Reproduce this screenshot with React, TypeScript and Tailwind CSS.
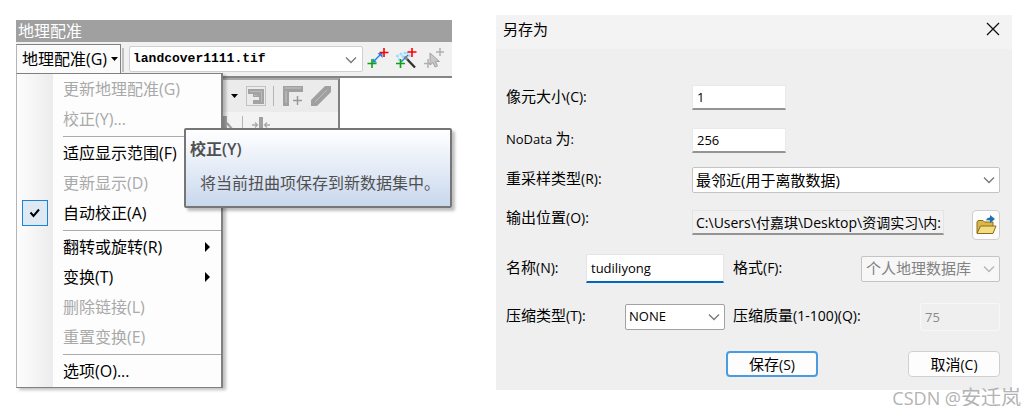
import { useState, type ReactNode } from "react"

const field = "bg-white border border-[#e9e9e9] border-b-2 border-b-[#949494] text-[13px] leading-4 pl-1 outline-none"

function Chevron({ className }: { className: string }) {
  return (
    <svg viewBox="0 0 12 8" className={`absolute w-3 h-2 pointer-events-none ${className}`} fill="none" stroke="currentColor" strokeWidth="1.3">
      <path d="M1 1.5 6 6.5 11 1.5" />
    </svg>
  )
}

function Label({ htmlFor, cn, en, className = "" }: { htmlFor: string; cn: string; en: string; className?: string }) {
  return (
    <label htmlFor={htmlFor} className={`pb-[3px] text-[15px] leading-5 whitespace-nowrap shrink-0 ${className}`}>
      {cn}
      <span className="text-sm leading-5">{en}</span>
    </label>
  )
}

/* Menu */
function MenuItem({ text, disabled, arrow }: { text: string; disabled?: boolean; arrow?: boolean }) {
  return (
    <button
      role="menuitem"
      disabled={disabled}
      className="w-full h-[30px] pl-[46px] pr-[11px] flex items-center justify-between text-left text-black disabled:text-[#a9a9a9]"
    >
      {text}
      {arrow && (
        <svg viewBox="0 0 5 10" className="w-[5px] h-[10px]">
          <path d="M0 0 5 5 0 10Z" fill="#000" />
        </svg>
      )}
    </button>
  )
}

function Separator() {
  return <div role="separator" className="h-1 ml-[46px] flex items-center"><div className="h-px w-full bg-[#ababab]" /></div>
}

function GeoMenu() {
  const [auto, setAuto] = useState(true)

  return (
    <div
      role="menu"
      className="absolute left-0 top-full z-10 w-[207px] pb-px border border-[#808080] border-l-[#b5b5b5] border-r-2 bg-[linear-gradient(to_right,#fdfdfd_0,#ececec_36px,#fdfdfd_36px)] shadow-[3px_2px_3px_rgba(0,0,0,0.25)]"
    >
      <MenuItem text="更新地理配准(G)" disabled />
      <MenuItem text="校正(Y)..." disabled />
      <Separator />
      <MenuItem text="适应显示范围(F)" />
      <MenuItem text="更新显示(D)" disabled />
      <label className="h-[30px] pl-[5px] flex items-center text-black">
        <span className="relative w-[26px] h-[26px] mr-[15px] shrink-0">
          <input
            type="checkbox"
            checked={auto}
            onChange={(e) => setAuto(e.target.checked)}
            className="block appearance-none w-full h-full border border-[#1883d7] bg-[#dfe9f4]"
          />
          {auto && (
            <svg viewBox="0 0 26 26" className="absolute inset-0 pointer-events-none" fill="none" stroke="#000" strokeWidth="2">
              <path d="M8.5 12.5 11.5 16 17 9.5" />
            </svg>
          )}
        </span>
        自动校正(A)
      </label>
      <Separator />
      <MenuItem text="翻转或旋转(R)" arrow />
      <MenuItem text="变换(T)" arrow />
      <MenuItem text="删除链接(L)" disabled />
      <MenuItem text="重置变换(E)" disabled />
      <Separator />
      <MenuItem text="选项(O)..." />
    </div>
  )
}

/* Toolbar icons */
function ToolButton({ label, className = "", children }: { label: string; className?: string; children: ReactNode }) {
  return (
    <button aria-label={label} className={`shrink-0 w-[22px] h-[22px] ${className}`}>
      <svg viewBox="0 0 22 22" className="w-[22px] h-[22px]" fill="none">{children}</svg>
    </button>
  )
}

function LinkIcon() {
  return (
    <ToolButton label="添加控制点">
      <path d="M6 15 15 6" stroke="#1e88e5" strokeWidth="1.4" />
      <path d="M15.500 6v5L10.500 6ZM6 15.500v-4L10 15.500Z" fill="#1e88e5" />
      <path d="M17 1v9M12.500 5.500h9" stroke="#f00" strokeWidth="1.600" />
      <path d="M5 12v9M.5 16.500h9" stroke="#12a012" strokeWidth="1.600" />
    </ToolButton>
  )
}

function WandIcon() {
  return (
    <ToolButton label="自动配准" className="ml-[6px]">
      <g fill="#9edcff">
        <circle cx="2.500" cy="9" r="1.600" />
        <circle cx="4" cy="12.500" r="1.300" />
        <circle cx="6" cy="7" r="1.600" />
        <circle cx="10" cy="6" r="1.600" />
        <circle cx="8" cy="9.500" r="1.500" />
        <circle cx="14.500" cy="8.500" r="1.500" />
        <circle cx="12.500" cy="6" r="1.200" />
      </g>
      <path d="M6 15 13 8" stroke="#1e88e5" strokeWidth="1.500" />
      <path d="M10 10 20 20.500" stroke="#333" strokeWidth="2.400" />
      <path d="M9.500 9.500 12.500 12.500" stroke="#888" strokeWidth="2.400" />
      <path d="M17 1v9M12.500 5h9" stroke="#f00" strokeWidth="1.600" />
      <path d="M5.500 12v9M1 16.500h9" stroke="#12a012" strokeWidth="1.600" />
    </ToolButton>
  )
}

function SelectLinkIcon() {
  return (
    <ToolButton label="选择控制点" className="ml-[6px]">
      <path d="M17 1v8M13 5h8M5 12v9M1 16.500h8" stroke="#b0b0b0" strokeWidth="1.500" />
      <path d="M7 6V18L10 15.500 12 20 14.500 19 12.500 14.500H16.500Z" fill="#c8c8c8" stroke="#a2a2a2" />
    </ToolButton>
  )
}

function EditorPanel() {
  return (
    <div className="w-[324px] h-[58px] pl-[207px] border-t-2 border-t-[#a8a8a8] border-r-2 border-r-[#808080] bg-[#f3f3f3] overflow-hidden">
      <div className="h-8 pl-2 flex items-center bg-[#ebebeb]">
        <svg viewBox="0 0 7 4" className="w-[7px] h-1"><path d="M0 0h7L3.500 4Z" fill="#000" /></svg>
        <svg viewBox="0 0 20 20" className="w-5 h-5 ml-2" fill="none">
          <rect x=".5" y=".5" width="19" height="19" stroke="#999" strokeDasharray="1 1" />
          <path d="M2 3h16v15H7v-4h6v-3H7V8H2Z" fill="#a3a3a3" />
          <path d="M4 5.500h11.500V16M8 9.500h3" stroke="#bbb" />
        </svg>
        <div className="w-px h-5 mx-[7px] bg-[#b5b5b5]" />
        <svg viewBox="0 0 22 22" className="w-[22px] h-[22px] ml-px" fill="none">
          <path d="M1 1h20v6H7v14H1Z" fill="#a0a0a0" />
          <path d="M2.500 3h17M4 6v12" stroke="#c6c6c6" />
          <path d="M15.500 11v9M11 15.500h9" stroke="#999" strokeWidth="1.500" />
        </svg>
        <svg viewBox="0 0 22 22" className="w-[22px] h-[22px] ml-[6px]" fill="none">
          <path d="M1 15 15 1h6v6L7 21H1Z" fill="#a0a0a0" />
          <path d="M5 17 17 5" stroke="#bbb" />
        </svg>
      </div>
      <div className="h-8 pt-1 flex items-start">
        <svg viewBox="0 0 10 16" className="w-[10px] h-4" fill="none">
          <path d="M0 0h4v16H0Z" fill="#a8a8a8" />
          <path d="M4 7 9 13" stroke="#a0a0a0" strokeWidth="2" />
        </svg>
        <div className="w-px h-4 mx-[9px] bg-[#b5b5b5]" />
        <svg viewBox="0 0 18 18" className="w-[18px] h-[18px]" fill="none">
          <path d="M9 1v16" stroke="#a0a0a0" strokeWidth="4" />
          <path d="M0 9h5M3 6.500 5.500 9 3 11.500M18 9h-5M15 6.500 12.500 9 15 11.500" stroke="#aaa" strokeWidth="1.300" />
        </svg>
      </div>
    </div>
  )
}

function GeoreferencingWindow() {
  return (
    <section className="relative min-w-0 mt-5 text-base">
      <h2 className="h-[22px] pl-[2px] flex items-center bg-[#a0a0a0] text-white leading-5">地理配准</h2>
      <div className="h-9 pt-[2px] flex items-start border-b-2 border-b-[#858585] bg-[#f1f1f1]">
        <div className="relative">
          <button className="relative z-20 h-[29px] w-[105px] pl-[5px] flex items-center gap-1 border border-b-0 border-[#808080] border-l-[#b5b5b5] bg-[#fbfbfb] text-black whitespace-nowrap">
            地理配准(G)
            <svg viewBox="0 0 7 4" className="w-[7px] h-1"><path d="M0 0h7L3.500 4Z" fill="#000" /></svg>
          </button>
          <GeoMenu />
        </div>
        <div className="w-[2px] h-6 mt-1 ml-px bg-[#c0c0c0]" />
        <div className="relative flex-1 ml-[5px] mt-[2px]">
          <select
            aria-label="图层"
            className="appearance-none block w-full h-[26px] pl-[3px] border border-[#d0d0d0] rounded-xs bg-white text-black text-[13px] font-['Liberation_Mono',monospace] font-semibold"
          >
            <option>landcover1111.tif</option>
          </select>
          <Chevron className="right-[6px] top-[10px] text-[#777]" />
        </div>
        <div className="flex pl-[4px] pr-[7px] pt-[3px]">
          <LinkIcon />
          <WandIcon />
          <SelectLinkIcon />
        </div>
      </div>
      <EditorPanel />

      {/* Tooltip */}
      <div
        role="tooltip"
        className="absolute z-30 left-[168px] right-0 top-[108px] h-20 pl-1 pt-[9px] border-2 border-[#767676] rounded-xs bg-linear-to-b from-white to-[#c9d8ed] text-[#505050] shadow-[3px_3px_3px_rgba(0,0,0,0.25)]"
      >
        <p className="leading-5 font-semibold">校正(Y)</p>
        <p className="pl-[10px] mt-[14px] leading-5 whitespace-nowrap">将当前扭曲项保存到新数据集中。</p>
      </div>
    </section>
  )
}

function FolderIcon() {
  return (
    <svg viewBox="0 0 22 22" className="w-[22px] h-[22px]">
      <path d="M2 19V8l1-1.500h5L9.500 8H18v11Z" fill="#d9b84a" stroke="#8a6d1a" />
      <path d="M2 19.500 5.500 12H21l-3 7.500Z" fill="#f3dc82" stroke="#8a6d1a" />
      <path d="M11 6.500c.5-2 2-3 4-3V1l5 4-5 4V6.500c-1.500-.5-3-.5-4 0Z" fill="#1c6fb5" />
    </svg>
  )
}

function SaveAsDialog() {
  return (
    <section role="dialog" aria-label="另存为" className="min-w-0 mt-[15px] bg-[#efefef] text-black">
      <header className="h-[34px] pl-[7px] pr-3 pb-[6px] flex items-center justify-between bg-[#f3f3f3]">
        <h2 className="text-[15px] leading-5">另存为</h2>
        <button aria-label="关闭">
          <svg viewBox="0 0 14 14" className="w-[14px] h-[14px]" stroke="#111" strokeWidth="1.300">
            <path d="M1 1 13 13M13 1 1 13" />
          </svg>
        </button>
      </header>

      <form className="pl-[10px] pr-3 pt-9 pb-[13px]" onSubmit={(e) => e.preventDefault()}>
        <div className="flex items-center">
          <Label htmlFor="cell" cn="像元大小" en="(C):" className="w-[186px]" />
          <input id="cell" defaultValue="1" className={`${field} w-[94px] h-[25px]`} />
        </div>

        <div className="flex items-start mt-[18px]">
          <label htmlFor="nodata" className="w-[186px] shrink-0 text-[13px] leading-5">
            NoData <span className="text-[15px] leading-5">为</span>:
          </label>
          <input id="nodata" defaultValue="256" className={`${field} w-[94px] h-[25px]`} />
        </div>

        <div className="flex items-center mt-[14px]">
          <Label htmlFor="resample" cn="重采样类型" en="(R):" className="w-[186px]" />
          <div className="relative flex-1">
            <select id="resample" className="appearance-none block w-full h-[26px] pl-[3px] border border-[#c4c4c4] rounded-xs bg-white text-[15px]">
              <option>最邻近(用于离散数据)</option>
            </select>
            <Chevron className="right-[5px] top-[9px] text-[#777]" />
          </div>
        </div>

        <div className="flex items-start mt-[14px]">
          <Label htmlFor="path" cn="输出位置" en="(O):" className="w-[186px]" />
          <input
            id="path"
            readOnly
            defaultValue="C:\Users\付嘉琪\Desktop\资调实习\内:"
            className="flex-1 min-w-0 h-[25px] mt-[3px] pl-[3px] border border-[#e4e4e4] border-b-2 border-b-[#949494] bg-[#f1f1f1] text-sm outline-none"
          />
          <button aria-label="浏览" className="w-7 h-[30px] mt-[3px] ml-[28px] flex items-center justify-center border border-[#cfcfcf] rounded bg-[#fdfdfd]">
            <FolderIcon />
          </button>
        </div>

        <div className="flex items-center mt-[14px]">
          <Label htmlFor="name" cn="名称" en="(N):" className="w-20" />
          <input
            id="name"
            defaultValue="tudiliyong"
            className="w-[138px] h-[29px] pl-1 border border-[#e4e4e4] border-b-2 border-b-[#0067c0] bg-white text-[13px] outline-none"
          />
          <Label htmlFor="format" cn="格式" en="(F):" className="ml-[9px]" />
          <div className="relative w-[139px] ml-auto">
            <select
              id="format"
              disabled
              className="appearance-none block w-full h-[26px] pl-1 border border-[#c4c4c4] rounded-xs bg-[#f7f7f7] text-[15px] text-[#838383] opacity-100"
            >
              <option>个人地理数据库</option>
            </select>
            <Chevron className="right-[5px] top-[9px] text-[#b5b5b5]" />
          </div>
        </div>

        <div className="flex items-center mt-5">
          <Label htmlFor="compress" cn="压缩类型" en="(T):" className="w-[119px]" />
          <div className="relative w-[100px]">
            <select id="compress" className="appearance-none block w-full h-[26px] pl-[3px] border border-[#a2a2a2] rounded-xs bg-white text-[13px]">
              <option>NONE</option>
            </select>
            <Chevron className="right-[5px] top-[9px] text-[#777]" />
          </div>
          <Label htmlFor="quality" cn="压缩质量" en="(1-100)(Q):" className="ml-2" />
          <input
            id="quality"
            disabled
            defaultValue="75"
            className="w-20 h-7 ml-auto pl-1 border border-[#f7f7f7] rounded-xs bg-[#efefef] text-[13px] text-[#8a8a8a]"
          />
        </div>

        <div className="flex justify-end gap-[90px] mt-5">
          <button type="submit" className="w-[92px] h-[26px] border-2 border-[#4a9be0] rounded bg-[#fdfdfd] text-[15px] leading-5">
            保存<span className="text-sm leading-5">(S)</span>
          </button>
          <button type="button" className="w-[92px] h-[26px] border border-[#d0d0d0] rounded bg-[#fdfdfd] text-[15px] leading-5">
            取消<span className="text-sm leading-5">(C)</span>
          </button>
        </div>
      </form>
    </section>
  )
}

export default function App() {
  return (
    <main className="bg-white font-['Open_Sans','Noto_Sans_CJK_SC',sans-serif]">
      <div className="grid grid-cols-[436fr_516fr] gap-11 pl-4 pr-[13px]">
        <GeoreferencingWindow />
        <SaveAsDialog />
      </div>
      <p className="pr-1 text-right text-lg leading-4 text-[#b3b3b3]">
        CSDN @<span className="text-[20px] leading-4">安迁岚</span>
      </p>
    </main>
  )
}
